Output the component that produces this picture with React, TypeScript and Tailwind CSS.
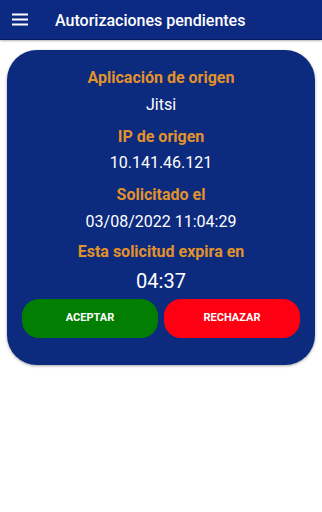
import React from "react";

export default function App() {
  return (
    <div className="w-[322px] h-[512px] bg-white" style={{ fontFamily: "Roboto, 'Liberation Sans', sans-serif" }}>
      <header className="h-[40px] bg-[#0c2a82] border-b border-[#071d5e] flex items-center shadow-[0_1px_2px_rgba(0,0,0,0.3)]">
        <div className="w-[55px] flex pl-[12px]">
          <svg width="16" height="39" viewBox="0 0 16 39">
            <rect x="0" y="13.5" width="16" height="2" fill="white" />
            <rect x="0" y="18.5" width="16" height="2" fill="white" />
            <rect x="0" y="23.5" width="16" height="2" fill="white" />
          </svg>
        </div>
        <h1 className="text-white text-[16px] font-medium leading-none mt-[2px]">Autorizaciones pendientes</h1>
      </header>
      <div className="px-[7px] pt-[10px]">
        <div className="w-[308px] h-[315px] bg-[#0c2a7e] rounded-[30px] shadow-[0_1px_3px_rgba(0,0,0,0.35)] flex flex-col items-center pt-[17px] px-[15px]">
          <div className="text-[#e2922b] text-[16px] font-bold leading-[22px]">Aplicación de origen</div>
          <div className="text-white text-[16px] leading-[22px] mt-[5px]">Jitsi</div>
          <div className="text-[#e2922b] text-[16px] font-bold leading-[22px] mt-[10px]">IP de origen</div>
          <div className="text-white text-[16px] leading-[22px] mt-[4px]">10.141.46.121</div>
          <div className="text-[#e2922b] text-[16px] font-bold leading-[22px] mt-[10px]">Solicitado el</div>
          <div className="text-white text-[16px] leading-[22px] mt-[5px]">03/08/2022 11:04:29</div>
          <div className="text-[#e2922b] text-[16px] font-bold leading-[22px] mt-[8px]">Esta solicitud expira en</div>
          <div className="text-white text-[20px] leading-[26px] mt-[5px]">04:37</div>
          <div className="flex gap-[6px] w-full mt-[5px]">
            <button className="flex-1 h-[39px] rounded-[17px] bg-[#027e02] text-white text-[11px] font-bold">ACEPTAR</button>
            <button className="flex-1 h-[39px] rounded-[17px] bg-[#ff0012] text-white text-[11px] font-bold">RECHAZAR</button>
          </div>
        </div>
      </div>
    </div>
  );
}
